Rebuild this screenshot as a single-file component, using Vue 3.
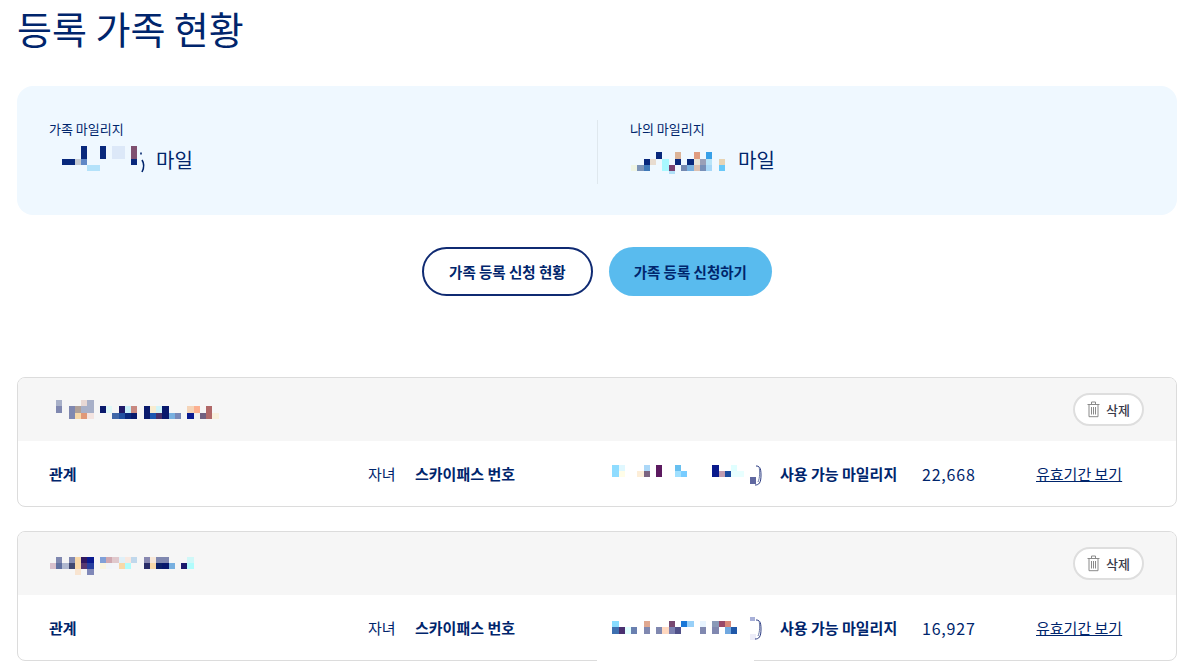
<template>
  <div class="page">
    <h1>등록 가족 현황</h1>

    <section class="summary">
      <div v-for="box in summary" :key="box.label" class="summary-col">
        <p class="summary-label">{{ box.label }}</p>
        <div class="summary-value">
          <svg :width="box.w" height="30" class="mosaic">
            <rect v-for="(c, i) in box.cells" :key="i" :x="c[0] - box.x" :y="c[1] - 144" :width="c[2]" :height="c[3]" :fill="c[4]" />
            <path v-if="box.tail" d="M92 8.5v2M93 16c2 3 2 8 0 12" fill="none" stroke="#00256c" stroke-width="1.6" />
          </svg>
          <span>마일</span>
        </div>
      </div>
    </section>

    <div class="actions">
      <button class="btn outline">가족 등록 신청 현황</button>
      <button class="btn filled">가족 등록 신청하기</button>
    </div>

    <article v-for="card in cards" :key="card.miles" class="card">
      <header class="card-head">
        <svg width="175" height="24" class="mosaic">
          <rect v-for="(c, i) in card.nameCells" :key="i" :x="c[0] - 49" :y="c[1] - card.nameY" :width="c[2]" :height="c[3]" :fill="c[4]" />
        </svg>
        <button class="del">
          <svg width="13" height="17" viewBox="0 0 13 17" fill="none" stroke="#8a8a8a" stroke-width="1">
            <path d="M.5 3.5h12M4.5 3V1h4v2" />
            <path d="M2 3.5v12.2h9V3.5" />
            <path d="M4.5 6v7.5M6.5 6v7.5M8.5 6v7.5" />
          </svg>
          삭제
        </button>
      </header>
      <div class="card-row">
        <strong>관계</strong>
        <span>자녀</span>
        <strong>스카이패스 번호</strong>
        <svg width="168" height="24" class="mosaic">
          <rect v-for="(c, i) in card.passCells" :key="i" :x="c[0] - 612" :y="c[1] - card.passY" :width="c[2]" :height="c[3]" :fill="c[4]" />
          <path d="M144 4c3 0 5 1 5 9s-2 10-6 10" fill="none" stroke="#2a3a80" stroke-width="1" />
          <path d="M147 5c1 3 1 11-1 15" fill="none" stroke="#6a78a8" stroke-width="1" />
        </svg>
        <strong>사용 가능 마일리지</strong>
        <span class="miles">{{ card.miles }}</span>
        <a href="#" class="link" @click.prevent>유효기간 보기</a>
      </div>
    </article>

    <div class="patch"></div>
  </div>
</template>

<script setup>
const navy = '#08287c'

const summary = [
  {
    label: '가족 마일리지',
    x: 49,
    w: 101,
    tail: true,
    cells: [
      [62, 159, 13, 6, navy], [75, 159, 6, 6, '#c6cbd2'], [81, 146, 6, 13, navy], [81, 159, 6, 6, '#5f87c6'],
      [87, 165, 13, 6, '#b4e2fa'], [100, 146, 6, 13, navy], [112, 146, 13, 13, '#dce8f8'],
      [131, 146, 6, 13, '#7f5070'], [131, 159, 6, 6, navy]
    ]
  },
  {
    label: '나의 마일리지',
    x: 630,
    w: 102,
    cells: [
      [631, 165, 6, 6, '#eef4e4'], [637, 165, 7, 6, '#7c94b8'], [644, 159, 6, 6, navy], [644, 165, 6, 6, '#3e78b8'],
      [650, 159, 6, 6, '#e8dcd0'], [656, 152, 6, 7, navy], [662, 159, 7, 12, '#a8f8ff'], [669, 165, 6, 6, '#784070'],
      [669, 171, 6, 6, '#b0e0f8'], [675, 152, 6, 7, '#dcb498'], [675, 159, 6, 6, navy], [681, 165, 6, 6, '#7488b0'],
      [687, 159, 7, 6, navy], [687, 165, 7, 6, '#78b0e0'], [694, 152, 6, 7, '#e09c80'], [694, 159, 6, 6, '#e8e4d8'],
      [694, 165, 6, 6, '#dcc0b0'], [700, 159, 6, 6, '#9aa0b8'], [700, 165, 6, 6, '#7890b8'], [706, 152, 6, 7, '#38a0e8'],
      [706, 159, 6, 6, '#b8e4f8'], [706, 165, 6, 6, '#a8d8f8'], [719, 159, 6, 6, '#e8d4b4'], [719, 165, 6, 6, '#68c8f8']
    ]
  }
]

const cards = [
  {
    miles: '22,668',
    nameY: 394,
    passY: 462,
    nameCells: [
      [56, 396, 6, 6, '#a8b0c8'], [56, 402, 6, 7, '#8088b0'], [69, 402, 6, 13, '#8088b0'], [75, 402, 6, 7, '#b0a098'],
      [75, 409, 6, 6, '#f8d8a8'], [81, 396, 6, 6, '#e8d8d4'], [81, 402, 6, 7, '#a8b0c8'], [81, 409, 6, 6, '#e09878'],
      [87, 396, 7, 13, '#a8b0c8'], [87, 409, 7, 6, '#f4e4e0'], [100, 402, 6, 7, '#0a1a6c'], [106, 402, 6, 7, '#e0f8f8'],
      [112, 409, 7, 6, '#4068a8'], [119, 402, 6, 7, '#201a68'], [119, 409, 6, 6, '#2050a0'], [125, 402, 6, 7, '#c8f0f8'],
      [125, 409, 6, 6, '#08287c'], [131, 402, 6, 7, '#c88880'], [131, 409, 6, 6, '#081a6c'], [144, 402, 6, 13, '#0a1a6c'],
      [150, 402, 6, 7, '#f8ecd0'], [150, 409, 6, 6, '#1c58b0'], [156, 402, 6, 7, '#d0f4f8'], [156, 409, 6, 6, '#483068'],
      [162, 402, 7, 13, '#08186c'], [169, 409, 6, 6, '#78b0e0'], [175, 409, 6, 6, '#7888b8'], [187, 402, 7, 7, '#f4d4b8'],
      [187, 409, 7, 6, '#0a1a90'], [194, 402, 6, 7, '#fcb090'], [194, 409, 6, 6, '#f0f0f0'], [200, 409, 6, 6, '#706080'],
      [206, 402, 6, 13, '#b06868'], [212, 409, 7, 6, '#f8f0dc']
    ],
    passCells: [
      [612, 465, 7, 12, '#8fdcff'], [619, 465, 6, 6, '#e0f8ff'], [619, 471, 6, 6, '#fffde8'], [637, 471, 7, 6, '#fdeed8'],
      [644, 465, 6, 6, '#acd8f8'], [644, 471, 6, 6, '#7c6480'], [656, 465, 6, 12, '#5c1a60'], [675, 465, 6, 6, '#68c0f0'],
      [675, 471, 6, 6, '#a0e0ff'], [681, 471, 6, 6, '#78ccff'], [712, 465, 7, 12, '#0a1a8c'], [719, 471, 6, 6, '#c09cb0'],
      [725, 471, 6, 6, '#1a4ca0'], [731, 465, 6, 6, '#e0ffff'], [731, 471, 13, 6, '#e8ffff'], [750, 477, 6, 7, '#6068a0']
    ]
  },
  {
    miles: '16,927',
    nameY: 548,
    passY: 616,
    nameCells: [
      [50, 559, 6, 6, '#d8c0cc'], [56, 553, 6, 6, '#8088b0'], [56, 559, 6, 6, '#6070a0'], [62, 559, 7, 6, '#b0b8d0'],
      [69, 553, 6, 6, '#8088b0'], [69, 559, 6, 6, '#404870'], [75, 553, 6, 12, '#f8d8a8'], [75, 565, 6, 6, '#f8e4d0'],
      [81, 553, 6, 6, '#301860'], [81, 559, 6, 6, '#583870'], [87, 553, 7, 6, '#0a1a90'], [87, 559, 7, 6, '#2840a0'],
      [87, 565, 7, 6, '#8088b8'], [100, 553, 6, 6, '#80a0d8'], [100, 559, 6, 6, '#f8f4e0'], [106, 553, 6, 6, '#d0a8b0'],
      [106, 559, 6, 6, '#f0f4f8'], [112, 553, 7, 6, '#e0c8cc'], [112, 559, 7, 6, '#f4f4f8'], [119, 553, 6, 6, '#e0f0f8'],
      [119, 559, 6, 6, '#f8d8a8'], [125, 553, 6, 6, '#f8e8e0'], [125, 559, 6, 6, '#b0fcfc'], [131, 553, 6, 6, '#c0d8ec'],
      [144, 553, 6, 6, '#8888b0'], [144, 559, 6, 6, '#282c68'], [150, 553, 6, 6, '#f8e8d8'], [150, 559, 6, 6, '#f8d8a8'],
      [156, 553, 13, 6, '#8088b0'], [156, 559, 6, 6, '#0c2068'], [162, 559, 7, 6, '#08186c'], [169, 559, 6, 6, '#78b0e0'],
      [181, 559, 6, 6, '#1a1a6c'], [187, 553, 7, 6, '#d0f8f8'], [187, 559, 7, 6, '#b0fcfc']
    ],
    passCells: [
      [612, 621, 7, 6, '#88dcff'], [612, 627, 7, 7, '#3e70b0'], [619, 627, 6, 7, '#4a3070'], [625, 627, 6, 7, '#e0ffff'],
      [631, 627, 6, 7, '#6a80b0'], [644, 621, 6, 6, '#e0a890'], [644, 627, 6, 7, '#8088b0'], [656, 627, 6, 7, '#8088b0'],
      [662, 627, 7, 7, '#ffd8c0'], [669, 621, 6, 6, '#784870'], [669, 627, 6, 7, '#7c80b0'], [675, 627, 6, 7, '#505088'],
      [681, 621, 6, 6, '#1a78d8'], [687, 621, 7, 6, '#98d0f8'], [700, 621, 6, 6, '#e8f4ff'], [700, 627, 6, 7, '#8088b0'],
      [712, 621, 7, 6, '#8a9ab8'], [712, 627, 7, 7, '#8088b0'], [719, 621, 6, 6, '#984868'], [725, 621, 6, 6, '#d88878'],
      [725, 627, 6, 7, '#70a8e0'], [731, 627, 6, 7, '#2058a8'], [750, 617, 5, 4, '#a8b0d8'], [750, 634, 6, 6, '#ececf8']
    ]
  }
]
</script>

<style>
body {
  margin: 0;
  background: #fff;
}
</style>

<style scoped>
.page {
  position: relative;
  box-sizing: border-box;
  width: 1187px;
  height: 665px;
  padding: 0 10px 0 17px;
  overflow: hidden;
  color: #00256c;
  font-family: "Noto Sans CJK KR", "Noto Sans", sans-serif;
}
h1 {
  margin: 0;
  height: 86px;
  font-size: 38px;
  font-weight: 400;
  line-height: 56px;
}
.summary {
  display: flex;
  height: 129px;
  padding: 34px 0 31px;
  box-sizing: border-box;
  background: #eff8ff;
  border-radius: 16px;
}
.summary-col {
  box-sizing: border-box;
  width: 580px;
  padding-left: 32px;
}
.summary-col + .summary-col {
  border-left: 1px solid #dfe8ee;
  padding-left: 32px;
}
.summary-label {
  margin: 0;
  font-size: 13px;
  line-height: 18px;
}
.summary-value {
  display: flex;
  align-items: center;
  gap: 6px;
  margin-top: 6px;
  height: 30px;
  font-size: 20px;
}
.mosaic {
  display: block;
  flex: none;
}
.actions {
  display: flex;
  justify-content: center;
  gap: 16px;
  margin-top: 32px;
  margin-bottom: 81px;
}
.btn {
  box-sizing: border-box;
  height: 49px;
  padding: 0 25px;
  border-radius: 25px;
  font: 700 14.5px "Noto Sans CJK KR", sans-serif;
  color: #00256c;
}
.outline {
  background: #fff;
  border: 2px solid #0f2a72;
}
.filled {
  background: #59bbee;
  border: 0;
}
.card {
  height: 130px;
  box-sizing: border-box;
  margin-bottom: 24px;
  border: 1px solid #dcdcdc;
  border-radius: 8px;
  overflow: hidden;
}
.card-head {
  display: flex;
  align-items: center;
  justify-content: space-between;
  height: 63px;
  padding: 0 32px 0 31px;
  background: #f6f6f6;
}
.del {
  display: flex;
  align-items: center;
  gap: 6px;
  box-sizing: border-box;
  width: 71px;
  height: 33px;
  padding: 0 0 0 12px;
  background: #fff;
  border: 2px solid #dedede;
  border-radius: 17px;
  color: #3a3a4a;
  font: 500 13px "Noto Sans CJK KR", sans-serif;
}
.card-row {
  display: grid;
  grid-template-columns: 319px 47px 197px 168px 142px 114px 1fr;
  align-items: center;
  height: 65px;
  padding-left: 31px;
  font-size: 15px;
}
.card-row strong {
  font-weight: 700;
}
.miles {
  font-size: 16px;
  letter-spacing: 0.8px;
}
.link {
  color: #00256c;
}
.patch {
  position: absolute;
  left: 597px;
  top: 657px;
  width: 157px;
  height: 8px;
  background: #fff;
}
</style>
